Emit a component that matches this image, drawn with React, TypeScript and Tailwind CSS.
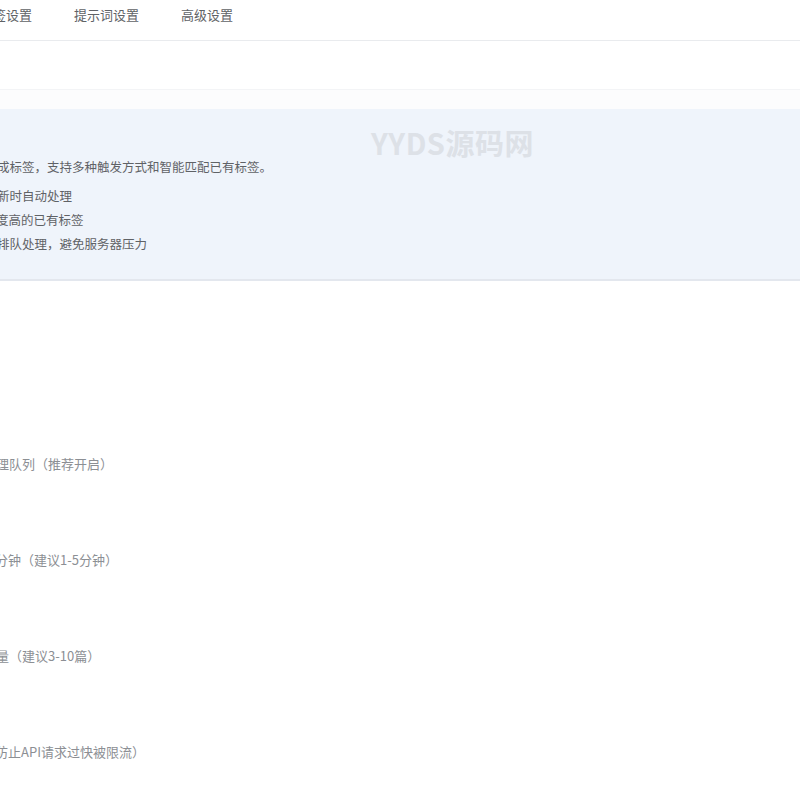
export default function App() {
  const tabs = ["标签设置", "提示词设置", "高级设置"];
  const features = [
    { text: "新时自动处理", shift: "-ml-[3px]" },
    { text: "度高的已有标签", shift: "-ml-[4px]" },
    { text: "排队处理，避免服务器压力", shift: "-ml-[3px]" },
  ];
  const hints = [
    { text: "理队列（推荐开启）", shift: "-ml-[4px]" },
    { text: "分钟（建议1-5分钟）", shift: "-ml-[5px]" },
    { text: "量（建议3-10篇）", shift: "-ml-[4px]" },
    { text: "防止API请求过快被限流）", shift: "-ml-[5px]" },
  ];

  return (
    <div
      className="w-[800px] h-[800px] overflow-hidden bg-white flex flex-col"
      style={{ fontFamily: '"Noto Sans CJK SC", "Noto Sans", sans-serif' }}
    >
      {/* Tabs */}
      <div className="h-[41px] shrink-0 border-b border-[#e9ebee]">
        <div className="flex gap-[42px] -ml-[20px] h-[30px] items-center text-[13px] text-[#606266]">
          {tabs.map((t) => (
            <span key={t} className="whitespace-nowrap">
              {t}
            </span>
          ))}
        </div>
      </div>

      {/* Empty toolbar */}
      <div className="h-[49px] shrink-0 border-b border-[#f3f4f6]" />
      <div className="h-[19px] shrink-0 bg-[#fcfcfd]" />

      {/* Info box */}
      <div className="relative h-[172px] shrink-0 bg-[#eff4fb] border-b-2 border-[#e3e7ee] pt-[48px]">
        <div className="absolute left-[371px] top-[19px] text-[29px] font-bold tracking-[0.5px] text-[#dde1e7] leading-none select-none">
          YYDS源码网
        </div>
        <div className="text-[12.5px] text-[#5f6266] leading-[20px] -ml-[3px] whitespace-nowrap">
          成标签，支持多种触发方式和智能匹配已有标签。
        </div>
        <div className="mt-[7px] flex flex-col text-[12.5px] text-[#5f6266] leading-[24px]">
          {features.map((f) => (
            <div key={f.text} className={`${f.shift} whitespace-nowrap`}>
              {f.text}
            </div>
          ))}
        </div>
      </div>

      {/* Form hints */}
      <div className="flex-1 flex flex-col pt-[173px] border-b border-[#e6e8eb]">
        {hints.map((h) => (
          <div
            key={h.text}
            className={`${h.shift} h-[96px] text-[13px] leading-[20px] text-[#8c8f94] whitespace-nowrap`}
          >
            {h.text}
          </div>
        ))}
      </div>
      <div className="h-[1px] shrink-0" />
    </div>
  );
}
